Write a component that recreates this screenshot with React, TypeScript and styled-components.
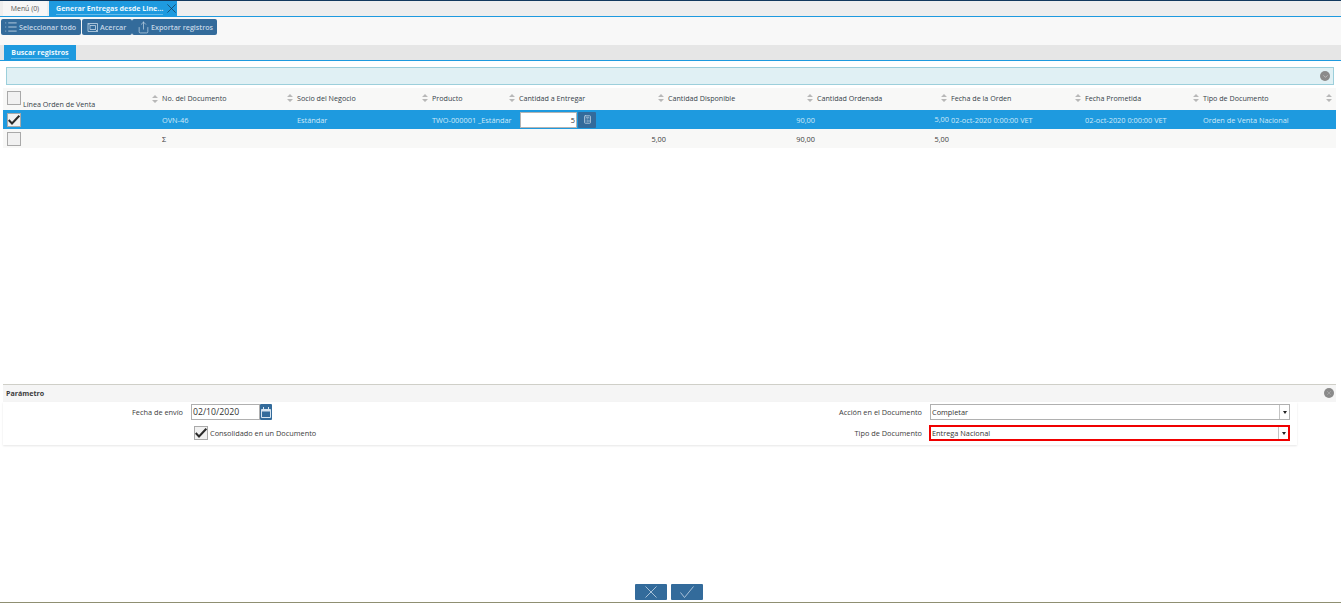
import React from "react";
import styled, { createGlobalStyle } from "styled-components";
import { Calculator, ChevronDown, List, Share } from "lucide-react";

const GlobalStyle = createGlobalStyle`
  html, body {
    margin: 0;
    padding: 0;
    background: #fff;
    font-family: "Open Sans", "Liberation Sans", sans-serif;
    font-size: 7.35px;
    color: #3c3c3c;
  }
`;

const COLUMNS = "159px 135px 135px 87px 149px 149px 134px 134px 118px 133px";
const BLUE = "#1e9adf";
const BUTTON = "#336b9b";

const Page = styled.div`
  height: 603px;
  display: flex;
  flex-direction: column;
  overflow: hidden;
`;

const TabBar = styled.div`
  height: 15px;
  border-top: 1px solid #12395e;
  background: #eeeeee;
  border-bottom: 1px solid ${BLUE};
  display: flex;
  align-items: stretch;
  padding-left: 3px;
  gap: 2px;
`;

const Tab = styled.div<{ $active?: boolean }>`
  display: flex;
  align-items: center;
  justify-content: ${(p) => (p.$active ? "space-between" : "center")};
  width: ${(p) => (p.$active ? "128px" : "44px")};
  box-sizing: border-box;
  padding: ${(p) => (p.$active ? "0 1px 0 7px" : "0")};
  background: ${(p) => (p.$active ? BLUE : "#f6f6f6")};
  color: ${(p) => (p.$active ? "#e8f5fc" : "#555")};
  font-weight: ${(p) => (p.$active ? 700 : 400)};
  font-size: ${(p) => (p.$active ? "7.1px" : "6.9px")};
  white-space: nowrap;
`;

const TabLabel = styled.span`
  border-bottom: 1px solid #66bbea;
  line-height: 11px;
`;

const Toolbar = styled.div`
  height: 26px;
  background: #f8f8f8;
  display: flex;
  align-items: flex-start;
  padding: 2px 0 0 1px;
  gap: 1px;
`;

const ToolButton = styled.div<{ $width: number; $pad: number; $overlap?: boolean }>`
  width: ${(p) => p.$width}px;
  height: 16px;
  box-sizing: border-box;
  border-radius: 2px;
  background: ${BUTTON};
  color: #c3d6e6;
  display: flex;
  align-items: center;
  gap: 1px;
  padding-left: ${(p) => p.$pad}px;
  font-size: 7.15px;
  font-weight: 600;
  white-space: nowrap;
  margin-right: ${(p) => (p.$overlap ? "-1px" : "0")};
`;

const SubTabBar = styled.div`
  height: 15px;
  background: #e6e6e6;
  border-bottom: 1px solid ${BLUE};
  padding-left: 4px;
  display: flex;
`;

const SubTab = styled.div`
  width: 72px;
  background: ${BLUE};
  color: #eef8fd;
  font-weight: 700;
  font-size: 7.1px;
  display: flex;
  justify-content: center;
  align-items: center;
`;

const FilterBar = styled.div`
  margin: 6px 7px 0 6px;
  height: 18px;
  box-sizing: border-box;
  background: #e0f0f4;
  border: 1px solid #9ccfdb;
  display: flex;
  align-items: center;
  justify-content: flex-end;
  padding-right: 3px;
`;

const RoundToggle = styled.div`
  width: 10px;
  height: 10px;
  border-radius: 50%;
  background: #8a8a8a;
  color: #ddd;
  display: flex;
  align-items: center;
  justify-content: center;
`;

const Table = styled.div`
  margin: 3px 0 0 3px;
  width: 1333px;
  flex: 1;
`;

const Row = styled.div<{ $kind: "head" | "selected" | "foot" }>`
  display: grid;
  grid-template-columns: ${COLUMNS};
  height: ${(p) => (p.$kind === "head" ? "22px" : "19px")};
  align-items: center;
  background: ${(p) => (p.$kind === "selected" ? BLUE : "#f8f8f7")};
  color: ${(p) => (p.$kind === "selected" ? "#cfe9f8" : "#3c3c3c")};
`;

const HeadCell = styled.div`
  display: flex;
  align-items: center;
  justify-content: space-between;
  height: 100%;
  box-sizing: border-box;
  padding: 0 4px 2px 0;
  white-space: nowrap;
  font-size: 7.15px;
  color: #363f4a;
`;

const FirstHeadCell = styled(HeadCell)`
  padding: 3px 4px 1px 4px;
  align-items: flex-start;
  gap: 2px;
`;

const FirstHeadLabel = styled.span`
  flex: 1;
  align-self: flex-end;
  line-height: 10px;
`;

const SortMark = styled.svg<{ $first?: boolean }>`
  flex: none;
  margin-top: ${(p) => (p.$first ? "4px" : "0")};
`;

const Cell = styled.div<{ $right?: boolean; $raise?: boolean }>`
  white-space: nowrap;
  text-align: ${(p) => (p.$right ? "right" : "left")};
  padding-right: ${(p) => (p.$right ? "2px" : "0")};
  position: ${(p) => (p.$raise ? "relative" : "static")};
  top: ${(p) => (p.$raise ? "-1px" : "0")};
`;

const CheckCell = styled.div`
  padding-left: 4px;
`;

const CheckBox = styled.div`
  width: 14px;
  height: 14px;
  box-sizing: border-box;
  border: 1px solid #a9a9a9;
  background: #f1f1f1;
  display: flex;
  align-items: center;
  justify-content: center;
  flex: none;
`;

const QtyCell = styled.div`
  display: flex;
  align-items: center;
  gap: 1px;
  padding-left: 1px;
`;

const QtyInput = styled.div`
  width: 57px;
  height: 16px;
  box-sizing: border-box;
  border: 1px solid #b4b4b4;
  background: #fff;
  color: #333;
  text-align: right;
  line-height: 14px;
  padding-right: 1px;
`;

const IconButton = styled.div<{ $w: number; $h: number }>`
  width: ${(p) => p.$w}px;
  height: ${(p) => p.$h}px;
  background: ${BUTTON};
  color: #c3d6e6;
  border-radius: 1px;
  display: flex;
  align-items: center;
  justify-content: center;
  flex: none;
`;

const ParamPanel = styled.div`
  margin: 0 5px 0 3px;
  border-top: 1px solid #cfcfc8;
`;

const ParamHead = styled.div`
  height: 17px;
  box-sizing: border-box;
  background: #f5f5f5;
  display: flex;
  align-items: center;
  justify-content: space-between;
  padding: 0 2px 1px 3px;
  font-weight: 700;
  font-size: 7.1px;
`;

const ParamForm = styled.div`
  width: 1294px;
  height: 43px;
  box-sizing: border-box;
  padding-top: 2px;
  display: grid;
  grid-template-columns: 184px 555px 184px 1fr;
  grid-template-rows: 16px 16px;
  row-gap: 5px;
  align-items: center;
  box-shadow: 0 1px 2px rgba(0, 0, 0, 0.1);
`;

const FieldLabel = styled.div`
  text-align: right;
  padding-right: 4px;
`;

const Spacer = styled.div``;

const DateField = styled.div`
  display: flex;
  padding-left: 4px;
`;

const DateInput = styled.div`
  width: 69px;
  height: 16px;
  box-sizing: border-box;
  border: 1px solid #b0b0b0;
  padding-left: 1px;
  font-size: 8.7px;
  line-height: 14px;
  color: #333;
`;

const ConsolidatedField = styled.div`
  display: flex;
  align-items: center;
  gap: 2px;
  padding-left: 7px;
`;

const SelectBox = styled.div<{ $error?: boolean }>`
  width: ${(p) => (p.$error ? "361px" : "360px")};
  height: 16px;
  margin-left: ${(p) => (p.$error ? "3px" : "4px")};
  box-sizing: border-box;
  border: ${(p) => (p.$error ? "2px solid #f00000" : "1px solid #b0b0b0")};
  background: #fff;
  display: flex;
  align-items: center;
  justify-content: space-between;
  padding-left: 1px;
  color: #333;
`;

const SelectArrow = styled.div`
  width: 9px;
  height: 100%;
  border-left: 1px solid #c4c4c4;
  display: flex;
  align-items: center;
  justify-content: center;
`;

const ArrowMark = styled.span`
  width: 0;
  height: 0;
  border-left: 2.5px solid transparent;
  border-right: 2.5px solid transparent;
  border-top: 3px solid #222;
`;

const Actions = styled.div`
  height: 158px;
  box-sizing: border-box;
  display: flex;
  align-items: flex-end;
  justify-content: center;
  gap: 4px;
  padding: 0 4px 2px 0;
  border-bottom: 1px solid #8f8f72;
`;

const HEADERS = [
  "No. del Documento",
  "Socio del Negocio",
  "Producto",
  "Cantidad a Entregar",
  "Cantidad Disponible",
  "Cantidad Ordenada",
  "Fecha de la Orden",
  "Fecha Prometida",
  "Tipo de Documento",
];

function Sort({ first }: { first?: boolean }) {
  return (
    <SortMark $first={first} width="6" height="8" viewBox="0 0 6 8">
      <path d="M3 0 L6 3 H0 Z M3 8 L0 5 H6 Z" fill="#b8b8b8" />
    </SortMark>
  );
}

function ZoomFrame() {
  return (
    <svg width="12" height="11" viewBox="0 0 12 11" fill="none" stroke="#c3d6e6" strokeWidth="0.8">
      <path d="M1 1.5 H10.5 V9.5 H1 Z" />
      <path d="M3 3.5 L1 1.5 M3 3.5 H8.5 V7.5 H3 Z M8.5 7.5 L10.5 9.5" />
    </svg>
  );
}

function CrossMark({ size, color }: { size: number; color: string }) {
  return (
    <svg width={size} height={size} viewBox="0 0 12 12" fill="none" stroke={color} strokeWidth="0.9">
      <path d="M0.5 0.5 L11.5 11.5 M11.5 0.5 L0.5 11.5" />
    </svg>
  );
}

function TickMark() {
  return (
    <svg width="14" height="12" viewBox="0 0 14 12" fill="none" stroke="#b5cbdf" strokeWidth="0.9">
      <path d="M0.5 6.5 L4.5 11.5 L13.5 0.5" />
    </svg>
  );
}

function BoxTick() {
  return (
    <svg width="12" height="10" viewBox="0 0 12 10" fill="none" stroke="#2b2b2b" strokeWidth="2">
      <path d="M0.7 5 L4 8.5 L11.3 0.7" />
    </svg>
  );
}

function CalendarMark() {
  return (
    <svg width="10" height="11" viewBox="0 0 10 11" fill="none" stroke="#d7e5f1">
      <path d="M0.5 2.5 H9.5 V10.5 H0.5 Z" strokeWidth="1" />
      <path d="M0.5 3.5 H9.5" strokeWidth="2" />
      <path d="M2.5 0 V2 M7.5 0 V2" strokeWidth="1" />
    </svg>
  );
}

function App() {
  return (
    <Page>
      <GlobalStyle />
      <TabBar>
        <Tab>Menú (0)</Tab>
        <Tab $active>
          <TabLabel>Generar Entregas desde Line...</TabLabel>
          <CrossMark size={9} color="#17324a" />
        </Tab>
      </TabBar>
      <Toolbar>
        <ToolButton $width={80} $pad={3}>
          <List size={14} strokeWidth={1.5} />
          Seleccionar todo
        </ToolButton>
        <ToolButton $width={50} $pad={5} $overlap>
          <ZoomFrame />
          Acercar
        </ToolButton>
        <ToolButton $width={85} $pad={5}>
          <Share size={13} strokeWidth={1.3} />
          Exportar registros
        </ToolButton>
      </Toolbar>
      <SubTabBar>
        <SubTab>
          <TabLabel>Buscar registros</TabLabel>
        </SubTab>
      </SubTabBar>
      <FilterBar>
        <RoundToggle>
          <ChevronDown size={7} strokeWidth={2} />
        </RoundToggle>
      </FilterBar>
      <Table>
        <Row $kind="head">
          <FirstHeadCell>
            <CheckBox />
            <FirstHeadLabel>Línea Orden de Venta</FirstHeadLabel>
            <Sort first />
          </FirstHeadCell>
          {HEADERS.map((label) => (
            <HeadCell key={label}>
              {label}
              <Sort />
            </HeadCell>
          ))}
        </Row>
        <Row $kind="selected">
          <CheckCell>
            <CheckBox>
              <BoxTick />
            </CheckBox>
          </CheckCell>
          <Cell>OVN-46</Cell>
          <Cell>Estándar</Cell>
          <Cell>TWO-000001 _Estándar</Cell>
          <QtyCell>
            <QtyInput>5</QtyInput>
            <IconButton $w={18} $h={16}>
              <Calculator size={9} strokeWidth={2} />
            </IconButton>
          </QtyCell>
          <Cell $right>90,00</Cell>
          <Cell $right $raise>5,00</Cell>
          <Cell>02-oct-2020 0:00:00 VET</Cell>
          <Cell>02-oct-2020 0:00:00 VET</Cell>
          <Cell>Orden de Venta Nacional</Cell>
        </Row>
        <Row $kind="foot">
          <CheckCell>
            <CheckBox />
          </CheckCell>
          <Cell>Σ</Cell>
          <Cell />
          <Cell />
          <Cell $right>5,00</Cell>
          <Cell $right>90,00</Cell>
          <Cell $right>5,00</Cell>
          <Cell />
          <Cell />
          <Cell />
        </Row>
      </Table>
      <ParamPanel>
        <ParamHead>
          Parámetro
          <RoundToggle>
            <CrossMark size={4} color="#ddd" />
          </RoundToggle>
        </ParamHead>
        <ParamForm>
          <FieldLabel>Fecha de envío</FieldLabel>
          <DateField>
            <DateInput>02/10/2020</DateInput>
            <IconButton $w={12} $h={16}>
              <CalendarMark />
            </IconButton>
          </DateField>
          <FieldLabel>Acción en el Documento</FieldLabel>
          <SelectBox>
            Completar
            <SelectArrow>
              <ArrowMark />
            </SelectArrow>
          </SelectBox>
          <Spacer />
          <ConsolidatedField>
            <CheckBox>
              <BoxTick />
            </CheckBox>
            Consolidado en un Documento
          </ConsolidatedField>
          <FieldLabel>Tipo de Documento</FieldLabel>
          <SelectBox $error>
            Entrega Nacional
            <SelectArrow>
              <ArrowMark />
            </SelectArrow>
          </SelectBox>
        </ParamForm>
      </ParamPanel>
      <Actions>
        <IconButton $w={32} $h={16}>
          <CrossMark size={12} color="#b5cbdf" />
        </IconButton>
        <IconButton $w={32} $h={16}>
          <TickMark />
        </IconButton>
      </Actions>
    </Page>
  );
}

export default App;
